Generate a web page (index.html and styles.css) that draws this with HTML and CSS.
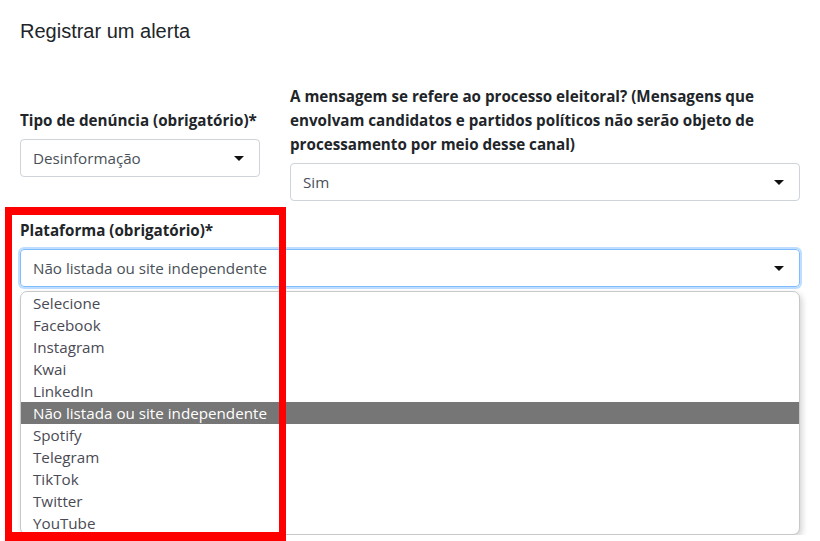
FILE: index.html
```html
<!DOCTYPE html>
<html lang="pt-BR">
<head>
    <meta charset="UTF-8">
    <title>Registrar um alerta</title>
    <link rel="stylesheet" href="styles.css">
</head>
<body>
    <div class="page">
        <h1 class="title">Registrar um alerta</h1>

        <div class="row">
            <div class="col col-tipo">
                <label class="label">Tipo de denúncia (obrigatório)*</label>
                <div class="select">Desinformação<span class="caret"></span></div>
            </div>
            <div class="col col-eleitoral">
                <label class="label">A mensagem se refere ao processo eleitoral? (Mensagens que envolvam candidatos e partidos políticos não serão objeto de processamento por meio desse canal)</label>
                <div class="select">Sim<span class="caret"></span></div>
            </div>
        </div>

        <div class="field">
            <label class="label">Plataforma (obrigatório)*</label>
            <div class="select select-open">Não listada ou site independente<span class="caret"></span></div>
            <ul class="options">
                <li>Selecione</li>
                <li>Facebook</li>
                <li>Instagram</li>
                <li>Kwai</li>
                <li>LinkedIn</li>
                <li class="active">Não listada ou site independente</li>
                <li>Spotify</li>
                <li>Telegram</li>
                <li>TikTok</li>
                <li>Twitter</li>
                <li>YouTube</li>
            </ul>
        </div>
    </div>
    <div class="highlight-box"></div>
</body>
</html>
```

FILE: styles.css
```css
body {
    margin: 0;
    background: #fff;
    color: #212529;
    font-family: "Open Sans", "Noto Sans", sans-serif;
    font-size: 15.2px;
    overflow: hidden;
}
.page {
    padding: 20px 20px 0 20px;
    width: 780px;
}
.title {
    font-family: "Liberation Sans", Arial, sans-serif;
    font-weight: normal;
    font-size: 20px;
    line-height: 22px;
    margin: 0 0 42px 0;
}
.row {
    display: flex;
    gap: 30px;
}
.col-tipo {
    width: 240px;
    padding-top: 24px;
}
.col-eleitoral {
    flex: 1;
}
.label {
    display: block;
    font-weight: bold;
    line-height: 24px;
    margin-bottom: 7px;
}
.select {
    position: relative;
    height: 36px;
    line-height: 36px;
    border: 1px solid #ced4da;
    border-radius: 4px;
    padding: 0 12px;
    color: #495057;
}
.caret {
    position: absolute;
    right: 15px;
    top: 16px;
    border-left: 5px solid transparent;
    border-right: 5px solid transparent;
    border-top: 5px solid #111;
}
.field {
    margin-top: 17px;
}
.select-open {
    border-color: #80bdff;
    box-shadow: 0 0 0 2px rgba(0, 123, 255, .25);
}
.options {
    list-style: none;
    margin: 4px 0 0 0;
    padding: 0;
    background: #fff;
    border: 1px solid #c8c8c8;
    border-radius: 7px;
    box-shadow: 2px 3px 6px rgba(0, 0, 0, .18);
    overflow: hidden;
}
.options li {
    height: 22px;
    line-height: 22px;
    padding-left: 12px;
    color: #4a4a55;
}
.options li.active {
    background: #767676;
    color: #fff;
}
.highlight-box {
    position: absolute;
    left: 5px;
    top: 207px;
    width: 267px;
    height: 317px;
    border: 7px solid #ff0000;
    border-top-width: 8px;
    border-bottom-width: 9px;
}
```
